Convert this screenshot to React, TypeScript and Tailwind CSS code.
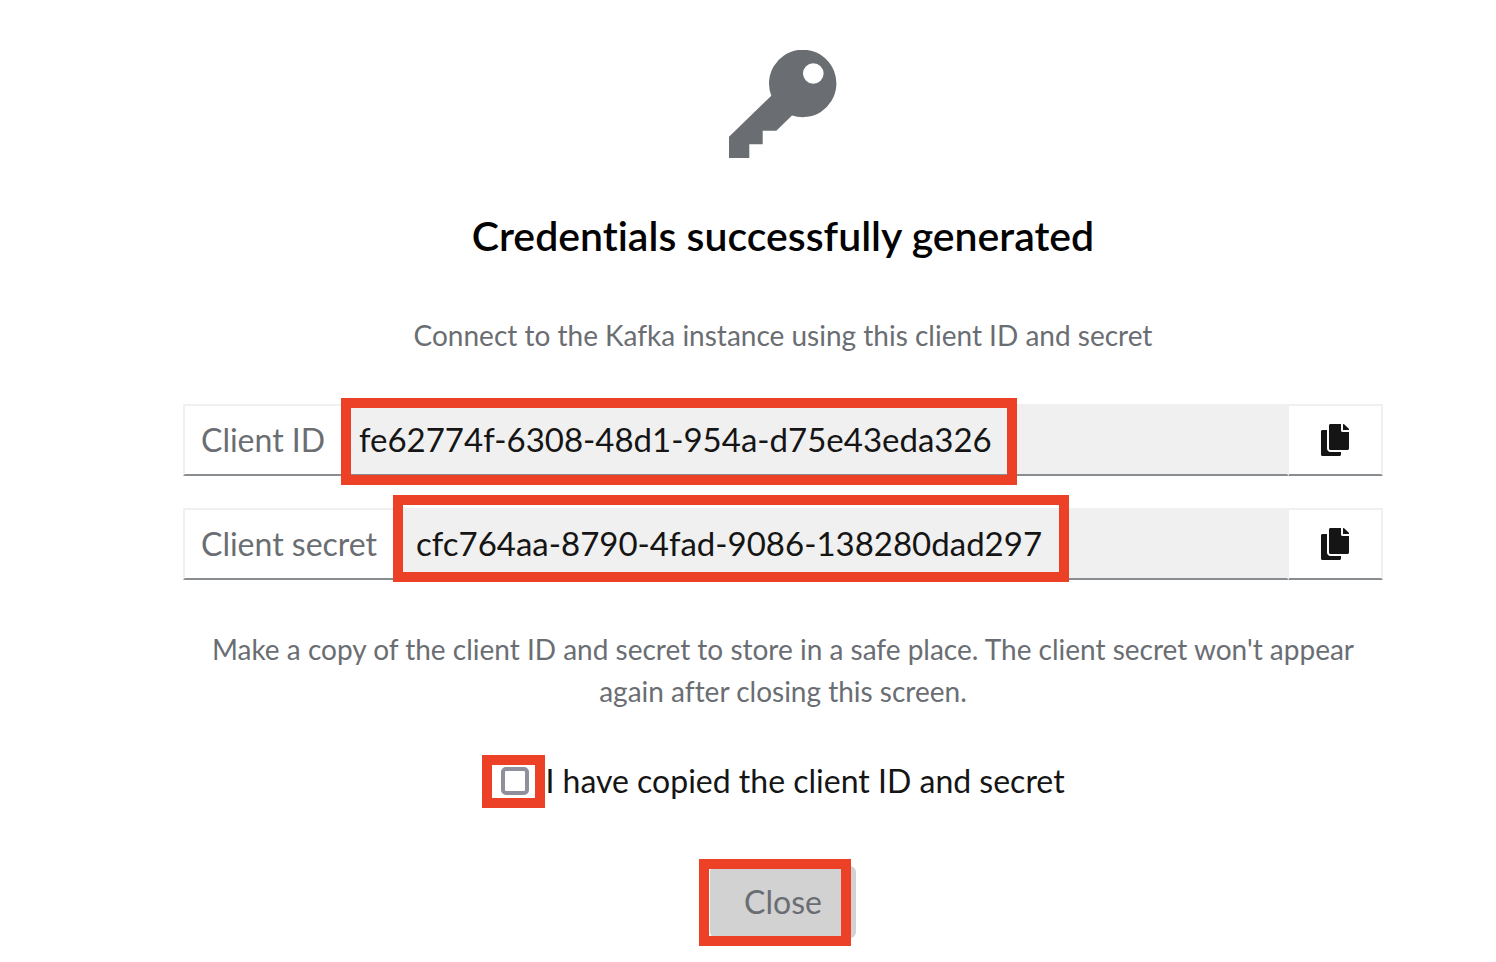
import { useState } from "react";
import { FaCopy } from "react-icons/fa";

function Highlight({ className }: { className: string }) {
  return (
    <span
      aria-hidden="true"
      className={`pointer-events-none absolute border-[10px] border-[#ec4126] ${className}`}
    />
  );
}

function KeyIcon() {
  return (
    <svg viewBox="0 0 108 108" className="size-[108px] text-[#6a6e73]" fill="currentColor" aria-hidden="true">
      <path
        fillRule="evenodd"
        d="M0 86.7 42.3 45.7A33.7 33.7 0 1 1 63 65.4L47.3 80.7H33.7V94.3H20.3V108H0ZM84.3 13.2a10.3 10.3 0 1 0 0 20.6a10.3 10.3 0 1 0 0-20.6Z"
      />
    </svg>
  );
}

type FieldProps = {
  id: string;
  label: string;
  value: string;
  labelClass: string;
  highlightClass: string;
};

function CopyField({ id, label, value, labelClass, highlightClass }: FieldProps) {
  return (
    <div className="relative flex h-[72px] w-full">
      <label
        htmlFor={id}
        className={`flex shrink-0 items-center border-2 border-r-0 border-[#f0f0f0] border-b-[#8a8d90] pl-4 text-[32px] text-[#6a6e73] ${labelClass}`}
      >
        {label}
      </label>
      <input
        id={id}
        readOnly
        value={value}
        className="min-w-0 flex-1 border-2 border-[#f0f0f0] border-b-[#8a8d90] bg-[#f0f0f0] px-4 text-[33px] text-[#151515] outline-none"
      />
      <button
        type="button"
        aria-label={`Copy ${label}`}
        onClick={() => navigator.clipboard?.writeText(value)}
        className="flex w-[94px] shrink-0 items-center justify-center border-2 border-l-0 border-[#f0f0f0] border-b-[#8a8d90] text-[32px] text-[#151515]"
      >
        <FaCopy className="h-8 w-7" />
      </button>
      <Highlight className={highlightClass} />
    </div>
  );
}

export default function App() {
  const [copied, setCopied] = useState(false);

  return (
    <main className="flex min-h-screen flex-col items-center bg-white pt-[50px] pr-[113px] pb-4 pl-[183px] font-['Lato',sans-serif] [font-variant-ligatures:none]">
      <KeyIcon />
      <h1 className="mt-[52px] text-[41px] leading-[52px] font-semibold text-[#030303]">
        Credentials successfully generated
      </h1>
      <p className="mt-[52px] text-[28px] leading-[42px] text-[#6a6e73]">
        Connect to the Kafka instance using this client ID and secret
      </p>
      <div className="mt-12 flex w-full flex-col gap-8">
        <CopyField
          id="client-id"
          label="Client ID"
          value="fe62774f-6308-48d1-954a-d75e43eda326"
          labelClass="w-[158px]"
          highlightClass="-top-1.5 left-[158px] h-[87px] w-[676px]"
        />
        <CopyField
          id="client-secret"
          label="Client secret"
          value="cfc764aa-8790-4fad-9086-138280dad297"
          labelClass="w-[215px]"
          highlightClass="-top-[13px] left-[210px] h-[87px] w-[676px]"
        />
      </div>
      <p className="mt-12 px-4 text-center text-[28px] leading-[42px] text-[#6a6e73]">
        Make a copy of the client ID and secret to store in a safe place. The client secret won't appear again after
        closing this screen.
      </p>
      <div className="relative mt-[45px] flex h-12 items-center gap-4">
        <input
          id="copied"
          type="checkbox"
          checked={copied}
          onChange={(event) => setCopied(event.target.checked)}
          className="size-7 appearance-none rounded-[5px] border-4 border-[#8f8f9d] bg-white checked:bg-[#0066cc]"
        />
        <label htmlFor="copied" className="text-[32px] leading-[48px] text-[#151515]">
          I have copied the client ID and secret
        </label>
        <Highlight className="-top-0.5 -left-[19px] h-[53px] w-[63px]" />
      </div>
      <div className="relative mt-[61px]">
        <button
          type="button"
          disabled={!copied}
          className="h-[72px] w-[146px] rounded-md bg-[#d2d2d2] text-[32px] text-[#6a6e73]"
        >
          Close
        </button>
        <Highlight className="-top-[7px] -left-[11px] h-[87px] w-[152px]" />
      </div>
    </main>
  );
}
